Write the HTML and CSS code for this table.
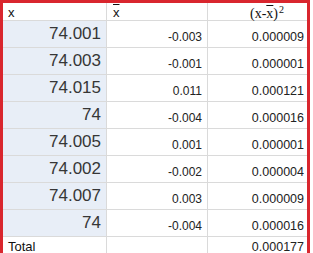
FILE: index.html
```html
<!DOCTYPE html>
<html>
<head>
<meta charset="utf-8">
<link rel="stylesheet" href="styles.css">
</head>
<body>
<div class="frame">
  <div class="sheet">
    <div class="c head h1">x</div>
    <div class="c head h2"><span class="bar">x</span></div>
    <div class="c head h3">(x-<span class="bar">x</span>)<sup>2</sup></div>

    <div class="c k">74.001</div><div class="c d">-0.003</div><div class="c e">0.000009</div>
    <div class="c k">74.003</div><div class="c d">-0.001</div><div class="c e">0.000001</div>
    <div class="c k">74.015</div><div class="c d">0.011</div><div class="c e">0.000121</div>
    <div class="c k">74</div><div class="c d">-0.004</div><div class="c e">0.000016</div>
    <div class="c k">74.005</div><div class="c d">0.001</div><div class="c e">0.000001</div>
    <div class="c k">74.002</div><div class="c d">-0.002</div><div class="c e">0.000004</div>
    <div class="c k">74.007</div><div class="c d">0.003</div><div class="c e">0.000009</div>
    <div class="c k">74</div><div class="c d">-0.004</div><div class="c e">0.000016</div>

    <div class="c tot">Total</div><div class="c d"></div><div class="c e et">0.000177</div>
  </div>
</div>
</body>
</html>
```

FILE: styles.css
```css
html, body {
  margin: 0;
  padding: 0;
  background: #ffffff;
}
body {
  width: 313px;
  height: 253px;
  overflow: hidden;
  font-family: "Liberation Sans", Arial, sans-serif;
}
.frame {
  width: 310px;
  box-sizing: border-box;
  border-top: 3px solid #d9262e;
  border-left: 3px solid #d9262e;
  border-right: 3px solid #d9262e;
  height: 253px;
}
.sheet {
  display: grid;
  grid-template-columns: 104px 101px 99px;
  grid-template-rows: 18px;
  grid-auto-rows: 27px;
}
.c {
  box-sizing: border-box;
  border-right: 1px solid #dadada;
  border-bottom: 1px solid #dadada;
  display: flex;
  color: #222;
  white-space: nowrap;
}
.c:nth-child(3n) {
  border-right: none;
}
.head {
  font-size: 13px;
  align-items: center;
  color: #111;
  padding-top: 1px;
}
.h1 {
  padding-left: 5px;
}
.h2 {
  padding-left: 6px;
}
.bar {
  text-decoration: overline;
}
.h3 {
  font-family: "Liberation Serif", "Times New Roman", serif;
  font-size: 14px;
  padding-left: 42px;
  padding-top: 4px;
}
.h3 sup {
  font-size: 10px;
  line-height: 0;
  position: relative;
  top: -4px;
  margin-left: 1px;
}
.k {
  background: #e8eef7;
  justify-content: flex-end;
  align-items: center;
  padding-right: 5px;
  font-size: 17px;
  color: #363636;
}
.d {
  justify-content: flex-end;
  align-items: flex-end;
  padding-right: 5px;
  padding-bottom: 3px;
  font-size: 12px;
}
.e {
  justify-content: flex-end;
  align-items: flex-end;
  padding-right: 3px;
  padding-bottom: 3px;
  font-size: 12.5px;
}
.tot {
  font-size: 13px;
  padding-left: 5px;
  align-items: flex-start;
  padding-top: 2px;
  color: #111;
}
.et {
  align-items: flex-start;
  padding-top: 3px;
}
```
